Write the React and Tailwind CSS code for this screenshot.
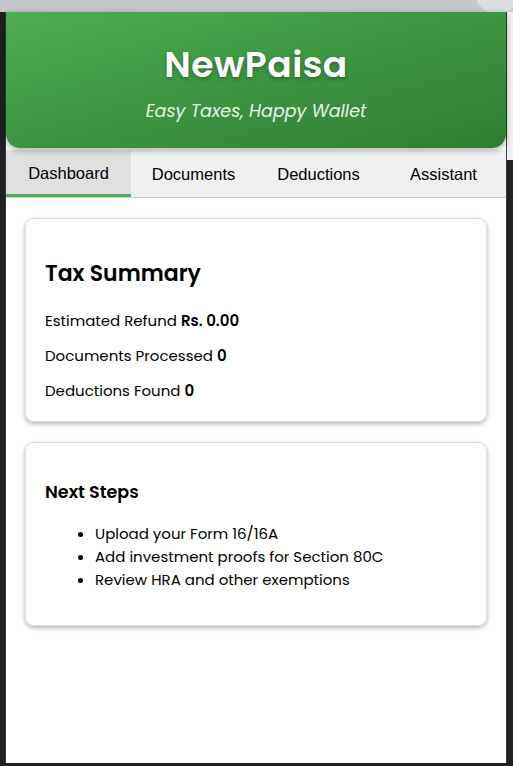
import React from "react";

const font = { fontFamily: '"Poppins", "Inter", "Noto Sans", sans-serif' };

export default function App() {
  const tabs = ["Dashboard", "Documents", "Deductions", "Assistant"];
  return (
    <div className="w-[513px] h-[766px] overflow-hidden bg-[#202124] flex flex-col">
      <div className="h-[12px] bg-[#c6c7ce] shrink-0 relative">
        <div className="absolute right-[-6px] top-[-30px] w-[44px] h-[44px] rounded-full bg-[#dcdde2]" />
      </div>
      <div className="flex flex-1">
        <div className="w-[5px] bg-[#202124]" />
        <div className="w-[502px] h-[751px] bg-white border-x border-[#3a3a3a] flex flex-col" style={font}>
          <div className="h-[136px] rounded-b-[14px] bg-gradient-to-br from-[#4caf50] to-[#2e7d32] shadow-[0_2px_6px_rgba(0,0,0,0.35)] flex flex-col items-center relative z-10">
            <div className="mt-[30px] text-[36px] leading-[46px] font-semibold text-white tracking-[0.5px] [text-shadow:0_2px_4px_rgba(0,0,0,0.3)]">
              NewPaisa
            </div>
            <div className="mt-[12px] text-[17.5px] leading-[22px] italic text-[#e8f5e9]">
              Easy Taxes, Happy Wallet
            </div>
          </div>
          <div className="mt-[2px] flex bg-[#f0f0f0] border-b border-[#cccccc] h-[48px]" style={{ fontFamily: '"Liberation Sans", Arial, sans-serif' }}>
            {tabs.map((t, i) => (
              <div
                key={t}
                className={
                  i === 0
                    ? "w-[125px] flex items-center justify-center text-[16.5px] text-black bg-[#e0e0e0] border-b-[3px] border-[#4caf50] pt-[2px]"
                    : "w-[125px] flex items-center justify-center text-[16.5px] text-black pt-[1px]"
                }
              >
                {t}
              </div>
            ))}
          </div>
          <div className="px-[19px] pt-[20px] flex flex-col gap-[20px]">
            <div className="h-[204px] rounded-[9px] border border-[#dddddd] shadow-[0_2px_5px_rgba(0,0,0,0.3)] px-[19px] pt-[40px]">
              <div className="text-[22px] leading-[29px] font-semibold text-black">Tax Summary</div>
              <div className="mt-[23px] flex flex-col gap-[15px] text-[15px] leading-[20px] text-black">
                <div>Estimated Refund <span className="font-semibold">Rs. 0.00</span></div>
                <div>Documents Processed <span className="font-semibold">0</span></div>
                <div>Deductions Found <span className="font-semibold">0</span></div>
              </div>
            </div>
            <div className="h-[184px] rounded-[9px] border border-[#dddddd] shadow-[0_2px_5px_rgba(0,0,0,0.3)] px-[19px] pt-[37px]">
              <div className="text-[17.5px] leading-[24px] font-semibold text-black">Next Steps</div>
              <ul className="mt-[18px] list-disc pl-[50px] text-[15px] leading-[23px] text-black">
                <li>Upload your Form 16/16A</li>
                <li>Add investment proofs for Section 80C</li>
                <li>Review HRA and other exemptions</li>
              </ul>
            </div>
          </div>
        </div>
        <div className="w-[6px] flex flex-col">
          <div className="h-[148px] bg-[#f1f1f4]" />
          <div className="flex-1 bg-[#202124]" />
        </div>
      </div>
    </div>
  );
}
